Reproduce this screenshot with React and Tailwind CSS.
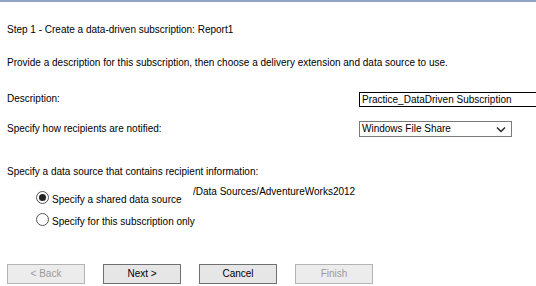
import React from "react";

const Btn = ({ children, disabled }) => (
  <button
    className={
      disabled
        ? "w-[78px] h-[20px] border border-[#b4b4b4] bg-[#ececec] text-[#9a9a9a] text-[10px] leading-none"
        : "w-[78px] h-[20px] border border-[#707070] bg-[#e6e6e6] text-black text-[10px] leading-none"
    }
  >
    {children}
  </button>
);

const Radio = ({ checked }) => (
  <span className="w-[13px] h-[13px] rounded-full border border-[#555] bg-white flex items-center justify-center shrink-0">
    {checked && <span className="w-[7px] h-[7px] rounded-full bg-[#222]" />}
  </span>
);

export default function App() {
  return (
    <div
      className="w-[536px] h-[286px] bg-white border-t-2 border-[#8fa3c2] overflow-hidden text-[10px] leading-[14px] text-black"
      style={{ fontFamily: '"Liberation Sans", Arial, sans-serif' }}
    >
      <div className="pl-[7px] pt-[21px]">Step 1 - Create a data-driven subscription: Report1</div>
      <div className="pl-[7px] mt-[19px]">
        Provide a description for this subscription, then choose a delivery extension and data source to use.
      </div>

      <div className="flex items-center pl-[7px] mt-[21px] h-[16px]">
        <span className="w-[352px]">Description:</span>
        <div className="flex-1 h-[15px] border border-black border-r-0 pl-[2px] leading-[13px]">
          Practice_DataDriven Subscription
        </div>
      </div>

      <div className="flex items-center pl-[7px] mt-[14px] h-[16px]">
        <span className="w-[352px]">Specify how recipients are notified:</span>
        <div className="w-[153px] h-[16px] border border-[#7a7a7a] pl-[2px] flex items-center justify-between pr-[5px]">
          <span>Windows File Share</span>
          <svg width="10" height="7" viewBox="0 0 10 7">
            <path d="M1 1.5 L5 5.5 L9 1.5" fill="none" stroke="#222" strokeWidth="1.4" />
          </svg>
        </div>
      </div>

      <div className="pl-[7px] mt-[28px]">Specify a data source that contains recipient information:</div>

      <div className="flex items-start pl-[36px] mt-[12px] h-[15px]">
        <Radio checked />
        <span className="ml-[3px] mt-[2px] w-[141px]">Specify a shared data source</span>
        <span className="-mt-[6px]">/Data Sources/AdventureWorks2012</span>
      </div>
      <div className="flex items-start pl-[36px] mt-[7px] h-[15px]">
        <Radio />
        <span className="ml-[3px] mt-[2px]">Specify for this subscription only</span>
      </div>

      <div className="flex gap-[18px] pl-[7px] mt-[36px]">
        <Btn disabled>&lt; Back</Btn>
        <Btn>Next &gt;</Btn>
        <Btn>Cancel</Btn>
        <Btn disabled>Finish</Btn>
      </div>
    </div>
  );
}
